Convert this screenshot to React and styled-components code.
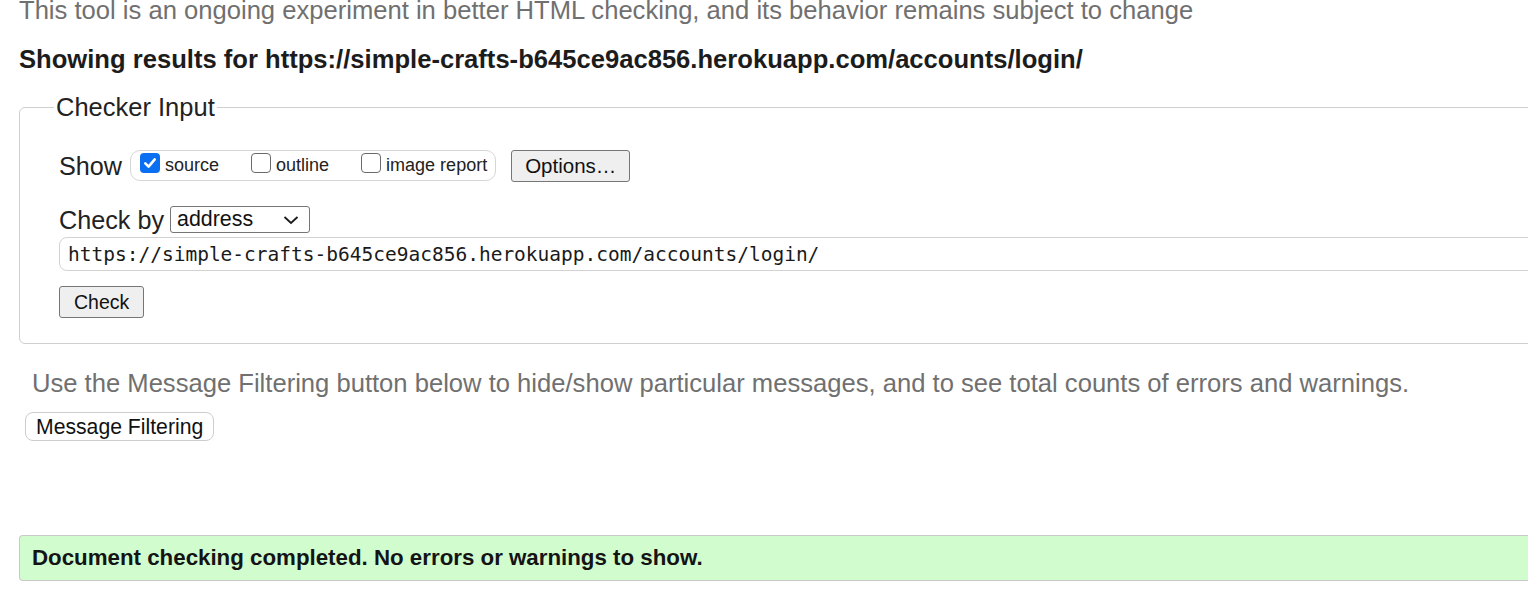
import React from 'react';
import styled, { createGlobalStyle } from 'styled-components';

const GlobalStyle = createGlobalStyle`
  html, body {
    margin: 0;
    padding: 0;
    background: #fff;
    overflow: hidden;
  }
  body {
    font-family: "Liberation Sans", Arial, sans-serif;
    color: #222;
  }
`;

const Page = styled.div`
  width: 1660px;
  padding-left: 19px;
`;

const Intro = styled.p`
  margin: -5px 0 0;
  font-size: 25.6px;
  line-height: 30px;
  color: #707070;
  white-space: nowrap;
`;

const Heading = styled.h2`
  margin: 19px 0 0;
  font-size: 25.6px;
  line-height: 30px;
  font-weight: 700;
  color: #1c1c1c;
  white-space: nowrap;
`;

const Fieldset = styled.fieldset`
  margin: 19px 0 0;
  padding: 28px 40px 25px 39px;
  border: 1px solid #cfcfcf;
  border-radius: 6px;
  min-width: 0;

  legend {
    margin-left: -5px;
    padding: 0 2px;
    font-size: 25.5px;
    line-height: 29px;
    color: #222;
  }
`;

const Row = styled.div`
  display: flex;
  align-items: center;
  gap: ${p => p.$gap || 7}px;
  height: ${p => p.$h}px;
  margin-top: ${p => p.$mt || 0}px;
`;

const Label = styled.span`
  font-size: 25.2px;
  line-height: 30px;
  white-space: nowrap;
`;

const Group = styled.div`
  display: flex;
  align-items: flex-end;
  height: 31px;
  padding: 0 8px 6px 9px;
  margin-bottom: 2px;
  border: 1px solid #d6d6d6;
  border-radius: 10px;
  box-sizing: border-box;
  gap: 32px;
`;

const Option = styled.label`
  display: flex;
  align-items: flex-end;
  gap: 5px;
  font-size: 18px;
  line-height: 18px;
  color: #222;
  white-space: nowrap;
`;

const Box = styled.span`
  display: flex;
  align-items: center;
  justify-content: center;
  width: 20px;
  height: 20px;
  box-sizing: border-box;
  border-radius: 4px;
  border: ${p => (p.$checked ? 'none' : '1.5px solid #6a6a6a')};
  background: ${p => (p.$checked ? '#0b6ff2' : '#fff')};
  margin-bottom: 1px;
`;

const Button = styled.button`
  height: ${p => p.$h || 32}px;
  padding: 0 ${p => p.$px || 13}px;
  margin-left: ${p => p.$ml || 0}px;
  font-family: "Liberation Sans", Arial, sans-serif;
  font-size: ${p => p.$fs || 20.5}px;
  color: #111;
  background: ${p => (p.$light ? '#fff' : '#efefef')};
  border: 1px solid ${p => (p.$light ? '#cdcdcd' : '#767676')};
  border-radius: ${p => (p.$light ? 8 : 3)}px;
  white-space: nowrap;
`;

const Select = styled.div`
  display: flex;
  align-items: center;
  justify-content: space-between;
  width: 140px;
  height: 27px;
  box-sizing: border-box;
  padding: 0 10px 0 6px;
  border: 1px solid #767676;
  border-radius: 3px;
  font-size: 21.4px;
  color: #111;
`;

const UrlInput = styled.input`
  display: block;
  width: 100%;
  height: 34px;
  box-sizing: border-box;
  margin-top: 4px;
  padding: 0 8px;
  border: 1px solid #d2d2d2;
  border-radius: 8px;
  font-family: "DejaVu Sans Mono", "Liberation Mono", monospace;
  font-size: 19.5px;
  color: #1a1a1a;
  outline: none;
`;

const Note = styled.p`
  margin: 24px 0 0 13px;
  font-size: 25.6px;
  line-height: 30px;
  color: #707070;
  white-space: nowrap;
`;

const Filter = styled.div`
  margin: 14px 0 0 6px;
`;

const Success = styled.div`
  margin-top: 94px;
  height: 44px;
  padding-left: 12px;
  border: 1px solid #c9c9c9;
  border-right: none;
  border-radius: 4px 0 0 4px;
  background: #d1fcce;
  font-size: 22.3px;
  line-height: 44px;
  font-weight: 700;
  color: #141414;
  white-space: nowrap;
`;

const Check = () => (
  <svg width="14" height="14" viewBox="0 0 14 14">
    <polyline points="2.3,7.4 5.6,10.6 11.7,3.4" fill="none" stroke="#fff" strokeWidth="2.6" strokeLinecap="round" strokeLinejoin="round" />
  </svg>
);

const Chevron = () => (
  <svg width="16" height="10" viewBox="0 0 16 10">
    <polyline points="1.5,2 8,8 14.5,2" fill="none" stroke="#1a1a1a" strokeWidth="1.8" />
  </svg>
);

const url = 'https://simple-crafts-b645ce9ac856.herokuapp.com/accounts/login/';

export default function App() {
  return (
    <Page>
      <GlobalStyle />
      <Intro>This tool is an ongoing experiment in better HTML checking, and its behavior remains subject to change</Intro>
      <Heading>Showing results for {url}</Heading>
      <Fieldset>
        <legend>Checker Input</legend>
        <Row $h={32} $gap={8}>
          <Label>Show</Label>
          <Group>
            <Option><Box $checked><Check /></Box>source</Option>
            <Option><Box />outline</Option>
            <Option><Box />image report</Option>
          </Group>
          <Button $ml={7}>Options…</Button>
        </Row>
        <Row $h={27} $mt={24} $gap={6}>
          <Label>Check by</Label>
          <Select>
            <span>address</span>
            <Chevron />
          </Select>
        </Row>
        <UrlInput readOnly value={url} />
        <Row $h={32} $mt={15}>
          <Button $px={14} $fs={19.5}>Check</Button>
        </Row>
      </Fieldset>
      <Note>Use the Message Filtering button below to hide/show particular messages, and to see total counts of errors and warnings.</Note>
      <Filter>
        <Button $light $h={29} $px={10} $fs={21.2}>Message Filtering</Button>
      </Filter>
      <Success>Document checking completed. No errors or warnings to show.</Success>
    </Page>
  );
}
